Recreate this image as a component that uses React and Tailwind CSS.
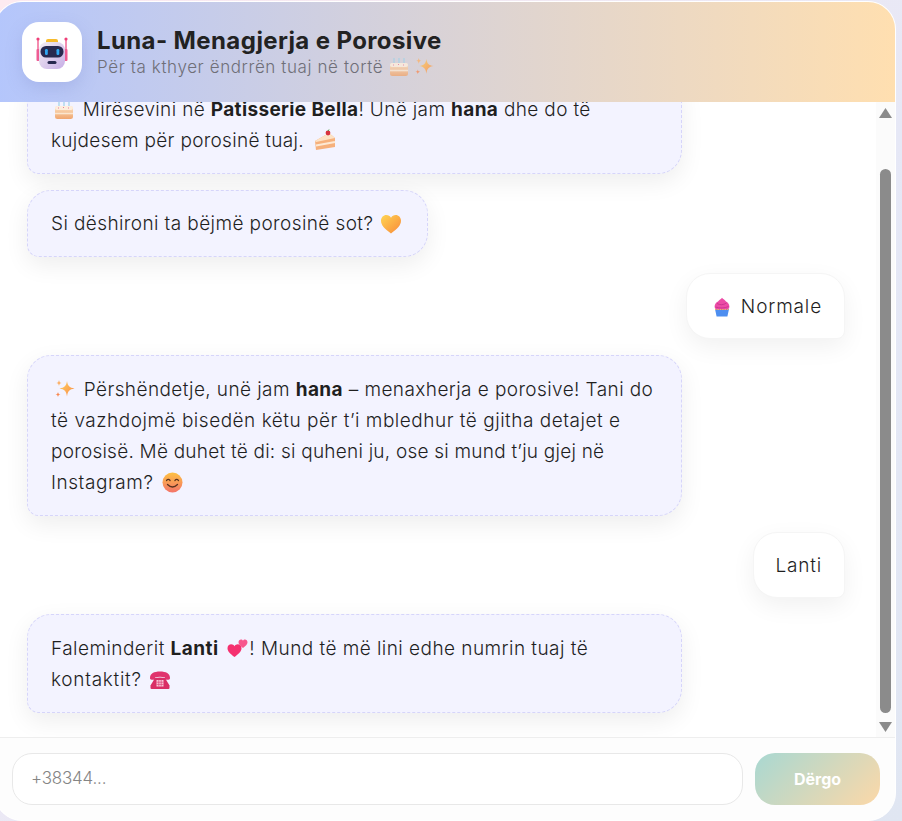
import React from "react";

// Small hand drawn emoji, the reference uses 3D style emoji images
const Cake = ({ className = "w-5 h-5" }) => (
  <svg viewBox="0 0 20 20" className={`inline-block align-[-4px] ${className}`}>
    <defs>
      <linearGradient id="cakeBody" x1="0" y1="0" x2="0" y2="1">
        <stop offset="0" stopColor="#fbe3c4" />
        <stop offset="1" stopColor="#f0a66f" />
      </linearGradient>
    </defs>
    <path d="M5 1v5M10 1v5M15 1v5" stroke="#9fd3e8" strokeWidth="1.2" />
    <rect x="1" y="6" width="18" height="13" rx="2.5" fill="url(#cakeBody)" />
    <rect x="1" y="6" width="18" height="4" rx="2" fill="#fdeedd" />
    <path d="M1 13.5h18" stroke="#fbe6cf" strokeWidth="1.6" />
    <path d="M4 8h1M9 7.5h1M14 8h1" stroke="#e77fa0" strokeWidth="1" />
  </svg>
);

const Slice = ({ className = "ml-1 w-[22px] h-[22px]" }) => (
  <svg viewBox="0 0 22 22" className={`inline-block align-[-4px] ${className}`}>
    <path d="M1 12 15 4l6 5v9L2 21z" fill="#f6b07c" />
    <path d="M1 12 15 4l6 5L2 13z" fill="#fde3c6" />
    <path d="M2 16.5 21 13" stroke="#fde9d4" strokeWidth="2" />
    <circle cx="14" cy="4" r="2.4" fill="#d8333f" />
    <path d="M14 2l1-1.5" stroke="#4c9a3f" strokeWidth="1" />
  </svg>
);

const Sparkles = ({ className = "w-[21px] h-[21px]" }) => (
  <svg viewBox="0 0 21 21" className={`inline-block align-[-4px] ${className}`}>
    <defs>
      <linearGradient id="spark" x1="0" y1="0" x2="1" y2="1">
        <stop offset="0" stopColor="#ffd25e" />
        <stop offset="1" stopColor="#f98a4b" />
      </linearGradient>
    </defs>
    <path d="M13 2c.8 5 2.4 6.6 7.5 7.5-5.100.9-6.700 2.500-7.500 8-.8-5.500-2.400-7.100-7.500-8C10.600 8.600 12.200 7 13 2z" fill="url(#spark)" />
    <path d="M5 1c.4 2 .9 2.600 2.700 3C5.900 4.400 5.400 5 5 7c-.4-2-.9-2.600-2.700-3C4.100 3.600 4.600 3 5 1z" fill="#fbb36c" />
    <path d="M4 13c.3 1.700.8 2.200 2.500 2.500C4.800 15.800 4.300 16.300 4 18c-.3-1.700-.8-2.200-2.500-2.500C3.200 15.200 3.700 14.700 4 13z" fill="#f9884f" />
  </svg>
);

const YellowHeart = () => (
  <svg viewBox="0 0 22 20" className="ml-px inline-block h-5 w-[22px] align-[-4px]">
    <defs>
      <linearGradient id="yHeart" x1="0" y1="0" x2="1" y2="1">
        <stop offset="0" stopColor="#ffd552" />
        <stop offset="1" stopColor="#f8893a" />
      </linearGradient>
    </defs>
    <path d="M11 19.500C5 15 1 11.500 1 6.800 1 3.400 3.500 1 6.300 1 8.300 1 10 2 11 3.800 12 2 13.700 1 15.700 1 18.500 1 21 3.400 21 6.800c0 4.700-4 8.200-10 12.700z" fill="url(#yHeart)" />
  </svg>
);

const Cupcake = () => (
  <svg viewBox="0 0 20 20" className="mx-[3px] inline-block h-5 w-5 align-[-4px]">
    <path d="M3 12h14l-1.600 7.500H4.600z" fill="#4d8ef0" />
    <path d="M10 .8c1 1.500 3.200 2 4 3.800 1.800.7 3.400 2.800 3.400 5.200 0 2-1.700 3-3.400 3H6c-1.800 0-3.400-1-3.400-3 0-2.400 1.500-4.400 3.400-5.200C7 2.800 9.200 2.300 10 .8z" fill="#ec4ca6" />
    <path d="M5 6.500c3 1.800 6.500 1.500 9.500-.5M3.500 10c4 1.400 9 1.400 13-.5" stroke="#c9338f" strokeWidth=".9" fill="none" />
    <path d="M3 12.500h14" stroke="#f3b35a" strokeWidth="1.200" strokeDasharray="1.400 1" />
  </svg>
);

const Smile = () => (
  <svg viewBox="0 0 21 21" className="ml-[3px] inline-block h-[21px] w-[21px] align-[-4px]">
    <defs>
      <linearGradient id="smileFace" x1="0" y1="0" x2="0" y2="1">
        <stop offset="0" stopColor="#fdc143" />
        <stop offset="1" stopColor="#f4746a" />
      </linearGradient>
    </defs>
    <circle cx="10.500" cy="10.500" r="10" fill="url(#smileFace)" />
    <path d="M4.500 8.500q1.800-2.200 3.600 0M12.900 8.500q1.800-2.200 3.600 0" stroke="#5b3320" strokeWidth="1.200" fill="none" strokeLinecap="round" />
    <path d="M5.500 12.500q5 5 10 0" stroke="#5b3320" strokeWidth="1.300" fill="none" strokeLinecap="round" />
  </svg>
);

const TwoHearts = () => (
  <svg viewBox="0 0 22 20" className="ml-[3px] inline-block h-5 w-[22px] align-[-3px]">
    <path d="M7.500 19C3.500 16 .5 13.500.5 10.200.5 7.900 2.200 6.300 4.200 6.300c1.400 0 2.600.7 3.300 1.900.7-1.200 1.900-1.900 3.300-1.900 2 0 3.700 1.600 3.700 3.900 0 3.300-3 5.800-7 8.800z" fill="#f5306f" />
    <path d="M16 10c-2.600-2-4.500-3.500-4.500-5.700C11.500 2.700 12.700 1.500 14 1.500c.9 0 1.600.5 2 1.300.4-.8 1.100-1.300 2-1.300 1.300 0 2.500 1.200 2.500 2.800C20.500 6.500 18.600 8 16 10z" fill="#f8578d" />
  </svg>
);

const Phone = () => (
  <svg viewBox="0 0 22 20" className="ml-px inline-block h-5 w-[22px] align-[-4px]">
    <path d="M1 8C1 3.500 5 1.500 11 1.500S21 3.500 21 8c0 1.200-.6 1.700-1.600 1.700H16V7.500c-3-1-7-1-10 0v2.200H2.600C1.600 9.700 1 9.200 1 8z" fill="#e0336d" />
    <path d="M6 8c3-.8 7-.8 10 0l4.500 7.500V18a1 1 0 0 1-1 1h-17a1 1 0 0 1-1-1v-2.500z" fill="#d92e66" />
    <rect x="7.500" y="10" width="7" height="6.500" fill="#f9c6d8" />
    <path d="M9.800 10v6.500M12.200 10v6.500M7.500 12.200h7M7.500 14.400h7" stroke="#d92e66" strokeWidth=".6" />
  </svg>
);

const Robot = () => (
  <svg viewBox="0 0 36 36" className="h-9 w-9">
    <defs>
      <linearGradient id="robotHead" x1="0" y1="0" x2="1" y2="1">
        <stop offset="0" stopColor="#f4eef2" />
        <stop offset="1" stopColor="#c6aee6" />
      </linearGradient>
    </defs>
    <path d="M4 5v20M32 5v20" stroke="#ef4f86" strokeWidth="1.300" />
    <circle cx="4" cy="5" r="1.600" fill="#ef3f78" />
    <circle cx="32" cy="5" r="1.600" fill="#ef3f78" />
    <rect x="2.500" y="15" width="3" height="12" rx="1" fill="#ee5c93" />
    <rect x="30.500" y="15" width="3" height="12" rx="1" fill="#ee5c93" />
    <rect x="12" y="5" width="12" height="4.500" rx="2" fill="#f7bb2c" />
    <rect x="5" y="8" width="26" height="27" rx="8" fill="url(#robotHead)" />
    <rect x="6.500" y="12" width="23" height="11.500" rx="5.500" fill="#27294f" />
    <rect x="11" y="15" width="2.800" height="6" rx="1.200" fill="#2fa6f0" />
    <rect x="22.500" y="15" width="2.800" height="6" rx="1.200" fill="#2fa6f0" />
    <rect x="13.500" y="27" width="9" height="3" rx="1.500" fill="#27294f" />
  </svg>
);

const BotBubble = ({ wide, children, className = "px-[23px] py-[17.5px]" }) => (
  <div className={`${wide ? "w-[655px]" : "w-fit"} shrink-0 self-start rounded-[24px] rounded-bl-[12px] border border-dashed border-[#d6d5fa] bg-[#f3f3ff] shadow-[0_8px_24px_rgba(0,0,0,0.07)] ${className}`}>
    {children}
  </div>
);

const UserBubble = ({ children }) => (
  <div className="w-fit shrink-0 self-end rounded-[24px] rounded-br-[8px] border border-[#f5f5f5] bg-white px-[22px] py-[16.5px] shadow-[0_8px_24px_rgba(0,0,0,0.06)]">
    {children}
  </div>
);

export default function App() {
  return (
    <div className="h-[821px] w-[902px] overflow-hidden bg-[linear-gradient(135deg,#fdeaf0_0%,#e6e8f6_60%,#e0e6f2_100%)] pt-px font-[Inter,sans-serif] text-[#1f1f1f]">
      <div className="ml-[-6px] flex h-[820px] w-[902px] flex-col overflow-hidden rounded-[28px] border border-white bg-white">
        <header className="flex h-[100px] shrink-0 items-center gap-[15px] bg-[linear-gradient(90deg,#b4c6fc,#ffdfb0)] pl-[27px]">
          <div className="flex h-[60px] w-[60px] items-center justify-center rounded-[17px] bg-white shadow-[0_6px_16px_rgba(120,130,200,0.25)]">
            <Robot />
          </div>
          <div>
            <h1 className="text-[24px] leading-[30px] font-bold tracking-[0.38px] text-[#222]">Luna- Menagjerja e Porosive</h1>
            <p className="text-[17px] leading-[22px] font-light tracking-[0.6px] text-[#6f6f78]">
              Për ta kthyer ëndrrën tuaj në tortë <Cake className="h-5 w-5 opacity-80" />{" "}
              <Sparkles className="h-5 w-5 opacity-80" />
            </p>
          </div>
        </header>

        <div className="flex min-h-0 flex-1">
          <div className="flex min-w-0 flex-1 flex-col justify-end gap-4 overflow-hidden pr-[31px] pb-6 pl-[32px] text-[19px] leading-[31px] font-light">
            <BotBubble wide>
              <span className="block tracking-[0.36px]">
                <Cake className="mx-[3px] h-5 w-5" /> Mirësevini në <b className="font-bold">Patisserie Bella</b>! Unë jam{" "}
                <b className="font-bold">hana</b> dhe do të
              </span>
              <span className="block tracking-[0.3px]">
                kujdesem për porosinë tuaj. <Slice />
              </span>
            </BotBubble>
            <BotBubble className="py-[17px] pr-[25px] pl-[23px]">
              <span className="block tracking-[0.4px]">
                Si dëshironi ta bëjmë porosinë sot? <YellowHeart />
              </span>
            </BotBubble>
            <UserBubble>
              <span className="block tracking-[0.85px]">
                <Cupcake /> Normale
              </span>
            </UserBubble>
            <BotBubble wide>
              <span className="block tracking-[0.41px]">
                <Sparkles className="mx-[3px] h-[21px] w-[21px]" /> Përshëndetje, unë jam <b className="font-bold">hana</b> – menaxherja e porosive! Tani do
              </span>
              <span className="block tracking-[0.51px]">të vazhdojmë bisedën këtu për t’i mbledhur të gjitha detajet e</span>
              <span className="block tracking-[0.23px]">porosisë. Më duhet të di: si quheni ju, ose si mund t’ju gjej në</span>
              <span className="block tracking-[0.55px]">
                Instagram? <Smile />
              </span>
            </BotBubble>
            <UserBubble>
              <span className="block tracking-[0.8px]">Lanti</span>
            </UserBubble>
            <BotBubble wide>
              <span className="block tracking-[0.45px]">
                Faleminderit <b className="font-bold">Lanti</b> <TwoHearts />! Mund të më lini edhe numrin tuaj të
              </span>
              <span className="block tracking-[0.7px]">
                kontaktit? <Phone />
              </span>
            </BotBubble>
          </div>

          {/* scrollbar */}
          <div className="flex w-[19px] shrink-0 flex-col items-center bg-[#fbfbfb] pt-1.5 pb-1">
            <svg viewBox="0 0 13 10" className="h-2.5 w-[13px] shrink-0">
              <path d="M6.500 0 13 10H0z" fill="#8b8b8b" />
            </svg>
            <div className="mt-[51px] h-[544px] w-[11px] shrink-0 rounded-full bg-[#8b8b8b]" />
            <svg viewBox="0 0 13 10" className="mt-[9px] h-2.5 w-[13px] shrink-0">
              <path d="M0 0h13L6.500 10z" fill="#8b8b8b" />
            </svg>
          </div>
        </div>

        <footer className="flex h-[83px] shrink-0 items-start gap-3 border-t border-[#eeeeee] bg-[#fdfdfd] pt-[15px] pr-[15px] pl-[17px]">
          <div className="flex h-[52px] flex-1 items-center rounded-[20px] border border-[#e8e8e8] bg-white px-[18px] text-[17px] font-light tracking-[-0.2px] text-[#858585]">
            +38344...
          </div>
          <button className="h-[52px] w-[125px] rounded-[20px] bg-[linear-gradient(135deg,#a8d8d2,#fcd8a8)] text-[16px] font-bold text-white">
            Dërgo
          </button>
        </footer>
      </div>
    </div>
  );
}
